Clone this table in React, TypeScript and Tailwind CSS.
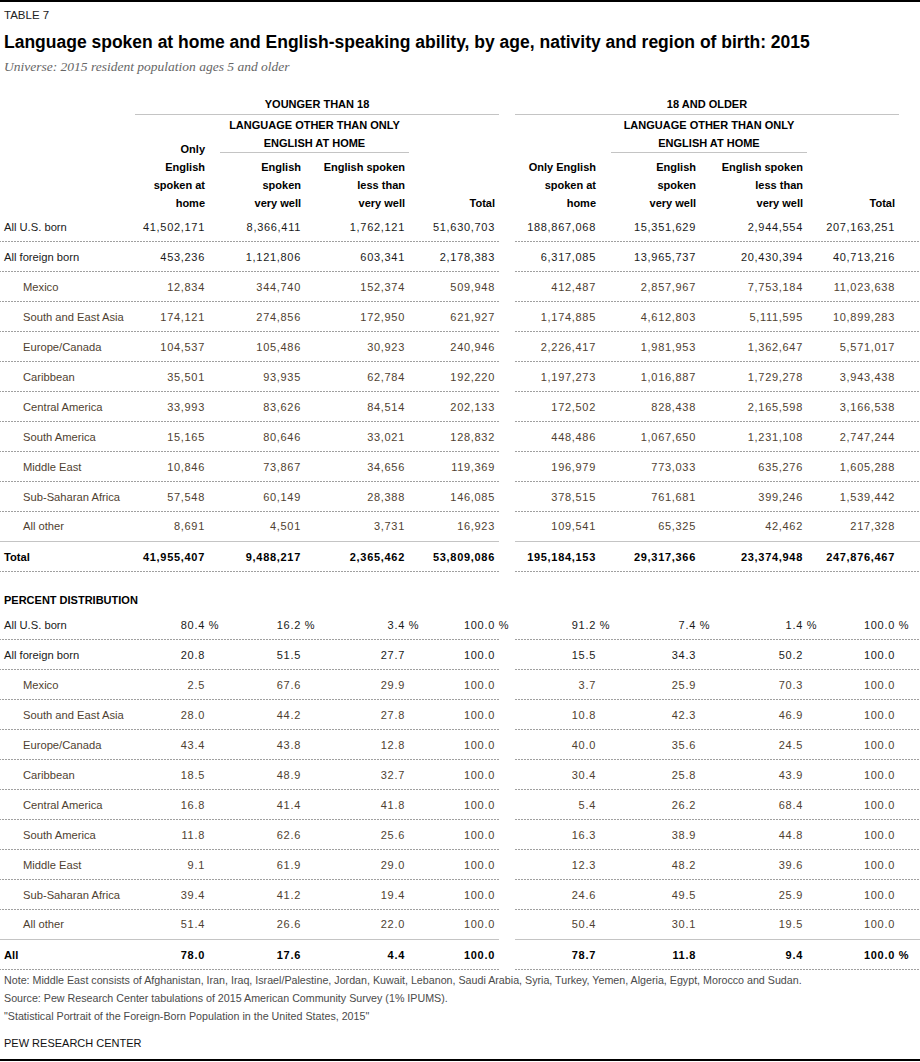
import type { ReactNode } from "react";

type Row = {
  label: string;
  left: string[];
  right: string[];
  indent?: boolean;
};

const counts: Row[] = [
  { label: "All U.S. born", left: ["41,502,171", "8,366,411", "1,762,121", "51,630,703"], right: ["188,867,068", "15,351,629", "2,944,554", "207,163,251"] },
  { label: "All foreign born", left: ["453,236", "1,121,806", "603,341", "2,178,383"], right: ["6,317,085", "13,965,737", "20,430,394", "40,713,216"] },
  { label: "Mexico", indent: true, left: ["12,834", "344,740", "152,374", "509,948"], right: ["412,487", "2,857,967", "7,753,184", "11,023,638"] },
  { label: "South and East Asia", indent: true, left: ["174,121", "274,856", "172,950", "621,927"], right: ["1,174,885", "4,612,803", "5,111,595", "10,899,283"] },
  { label: "Europe/Canada", indent: true, left: ["104,537", "105,486", "30,923", "240,946"], right: ["2,226,417", "1,981,953", "1,362,647", "5,571,017"] },
  { label: "Caribbean", indent: true, left: ["35,501", "93,935", "62,784", "192,220"], right: ["1,197,273", "1,016,887", "1,729,278", "3,943,438"] },
  { label: "Central America", indent: true, left: ["33,993", "83,626", "84,514", "202,133"], right: ["172,502", "828,438", "2,165,598", "3,166,538"] },
  { label: "South America", indent: true, left: ["15,165", "80,646", "33,021", "128,832"], right: ["448,486", "1,067,650", "1,231,108", "2,747,244"] },
  { label: "Middle East", indent: true, left: ["10,846", "73,867", "34,656", "119,369"], right: ["196,979", "773,033", "635,276", "1,605,288"] },
  { label: "Sub-Saharan Africa", indent: true, left: ["57,548", "60,149", "28,388", "146,085"], right: ["378,515", "761,681", "399,246", "1,539,442"] },
  { label: "All other", indent: true, left: ["8,691", "4,501", "3,731", "16,923"], right: ["109,541", "65,325", "42,462", "217,328"] },
];

const countTotal: Row = {
  label: "Total",
  left: ["41,955,407", "9,488,217", "2,365,462", "53,809,086"],
  right: ["195,184,153", "29,317,366", "23,374,948", "247,876,467"],
};

const shares: Row[] = [
  { label: "All U.S. born", left: ["80.4", "16.2", "3.4", "100.0"], right: ["91.2", "7.4", "1.4", "100.0"] },
  { label: "All foreign born", left: ["20.8", "51.5", "27.7", "100.0"], right: ["15.5", "34.3", "50.2", "100.0"] },
  { label: "Mexico", indent: true, left: ["2.5", "67.6", "29.9", "100.0"], right: ["3.7", "25.9", "70.3", "100.0"] },
  { label: "South and East Asia", indent: true, left: ["28.0", "44.2", "27.8", "100.0"], right: ["10.8", "42.3", "46.9", "100.0"] },
  { label: "Europe/Canada", indent: true, left: ["43.4", "43.8", "12.8", "100.0"], right: ["40.0", "35.6", "24.5", "100.0"] },
  { label: "Caribbean", indent: true, left: ["18.5", "48.9", "32.7", "100.0"], right: ["30.4", "25.8", "43.9", "100.0"] },
  { label: "Central America", indent: true, left: ["16.8", "41.4", "41.8", "100.0"], right: ["5.4", "26.2", "68.4", "100.0"] },
  { label: "South America", indent: true, left: ["11.8", "62.6", "25.6", "100.0"], right: ["16.3", "38.9", "44.8", "100.0"] },
  { label: "Middle East", indent: true, left: ["9.1", "61.9", "29.0", "100.0"], right: ["12.3", "48.2", "39.6", "100.0"] },
  { label: "Sub-Saharan Africa", indent: true, left: ["39.4", "41.2", "19.4", "100.0"], right: ["24.6", "49.5", "25.9", "100.0"] },
  { label: "All other", indent: true, left: ["51.4", "26.6", "22.0", "100.0"], right: ["50.4", "30.1", "19.5", "100.0"] },
];

const shareTotal: Row = {
  label: "All",
  left: ["78.0", "17.6", "4.4", "100.0"],
  right: ["78.7", "11.8", "9.4", "100.0"],
};

const dotted =
  "bg-[linear-gradient(to_right,#a0a0a0_2px,transparent_2px)] bg-[length:3px_1px] bg-bottom bg-repeat-x";
const solid = "border-b border-[#c4c4c4]";

function Pct() {
  return <span className="inline-block w-0 whitespace-nowrap text-left">{"\u00a0%"}</span>;
}

function Num({ value, pct }: { value: string; pct?: boolean }) {
  return (
    <div className="pr-1 text-right text-[11px] tracking-[0.7px]">
      {value}
      {pct ? <Pct /> : null}
    </div>
  );
}

function DataRow({
  row,
  line,
  bold,
  pct,
  lastPct,
}: {
  row: Row;
  line: "dot" | "solid";
  bold?: boolean;
  pct?: boolean;
  lastPct?: boolean;
}) {
  const rule = line === "dot" ? dotted : solid;
  const tone = bold
    ? "font-bold text-black"
    : row.indent
      ? "text-[#4f3f31]"
      : "text-[#1a1a1a]";
  return (
    <div className={`flex h-[30px] ${tone}`}>
      <div
        className={`grid w-[499px] grid-cols-[135px_74px_96px_104px_90px] items-center ${rule}`}
      >
        <div className={`text-[11.2px] ${row.indent ? "pl-[23px]" : "pl-1"}`}>
          {row.label}
        </div>
        {row.left.map((v, i) => (
          <Num key={i} value={v} pct={pct} />
        ))}
      </div>
      <div className="w-4" />
      <div
        className={`grid w-[405px] grid-cols-[85px_100px_107px_92px_21px] items-center ${rule}`}
      >
        {row.right.map((v, i) => (
          <Num key={i} value={v} pct={pct || (lastPct && i === 3)} />
        ))}
        <div />
      </div>
    </div>
  );
}

function Group({
  title,
  first,
  wide,
}: {
  title: string;
  first: ReactNode;
  wide?: boolean;
}) {
  return (
    <div className={`flex flex-col ${wide ? "w-[384px]" : "w-[364px]"}`}>
      <div className="h-[19px] text-center leading-[18px]">{title}</div>
      <div className="h-px bg-[#c4c4c4]" />
      <div className="flex items-end leading-[18px]">
        <div className={`pr-1 text-right ${wide ? "w-[85px]" : "w-[74px]"}`}>
          {first}
        </div>
        <div className={`flex flex-col ${wide ? "w-[207px]" : "w-[200px]"}`}>
          <div className="ml-[11px] pt-px text-center">
            LANGUAGE OTHER THAN ONLY
            <br />
            ENGLISH AT HOME
          </div>
          <div className="ml-[11px] h-px bg-[#c4c4c4]" />
          <div className="mt-[5px] flex">
            <div className={`pr-1 text-right ${wide ? "w-[100px]" : "w-[96px]"}`}>
              English
              <br />
              spoken
              <br />
              very well
            </div>
            <div className="w-[104px] flex-1 pr-1 text-right">
              English spoken
              <br />
              less than
              <br />
              very well
            </div>
          </div>
        </div>
        <div className={`pr-1 text-right ${wide ? "w-[92px]" : "w-[90px]"}`}>Total</div>
      </div>
    </div>
  );
}

export default function App() {
  return (
    <div className="w-[920px] bg-white font-['Liberation_Sans',Arial,sans-serif] text-black">
      <div className="border-t-2 border-black" />
      <div className="mt-[6px] h-[14px] pl-1 text-[11.5px] leading-[14px] text-[#222]">
        TABLE 7
      </div>
      <h1 className="mt-[8px] h-[24px] pl-1 text-[17.5px] leading-[24px] font-bold">
        Language spoken at home and English-speaking ability, by age, nativity
        and region of birth: 2015
      </h1>
      <div className="mt-[4px] h-[18px] pl-1 font-['Liberation_Serif',Georgia,serif] text-[13.5px] leading-[18px] text-[#666] italic">
        Universe: 2015 resident population ages 5 and older
      </div>

      <div className="mt-[19px] flex text-[11px] font-bold">
        <div className="w-[135px]" />
        <Group
          title="YOUNGER THAN 18"
          first={
            <>
              Only
              <br />
              English
              <br />
              spoken at
              <br />
              home
            </>
          }
        />
        <div className="w-4" />
        <Group
          wide
          title="18 AND OLDER"
          first={
            <>
              Only English
              <br />
              spoken at
              <br />
              home
            </>
          }
        />
      </div>

      {counts.map((row, i) => (
        <DataRow
          key={row.label}
          row={row}
          line={i === counts.length - 1 ? "solid" : "dot"}
        />
      ))}
      <DataRow row={countTotal} line="dot" bold />

      <div className="mt-[19px] flex h-[19px] items-center pl-1 text-[11px] font-bold">
        PERCENT DISTRIBUTION
      </div>

      {shares.map((row, i) => (
        <DataRow
          key={row.label}
          row={row}
          pct={i === 0}
          line={i === shares.length - 1 ? "solid" : "dot"}
        />
      ))}
      <DataRow row={shareTotal} line="dot" bold lastPct />

      <div className="mt-px pl-1 text-[10.7px] leading-[18px] text-[#4a4a4a]">
        <p>
          Note: Middle East consists of Afghanistan, Iran, Iraq,
          Israel/Palestine, Jordan, Kuwait, Lebanon, Saudi Arabia, Syria,
          Turkey, Yemen, Algeria, Egypt, Morocco and Sudan.
        </p>
        <p>
          Source: Pew Research Center tabulations of 2015 American Community
          Survey (1% IPUMS).
        </p>
        <p>"Statistical Portrait of the Foreign-Born Population in the United States, 2015"</p>
      </div>
      <div className="mt-[9px] h-[18px] pl-1 text-[11px] leading-[18px] text-[#111]">
        PEW RESEARCH CENTER
      </div>
      <div className="mt-[7px] border-t-2 border-black" />
    </div>
  );
}
